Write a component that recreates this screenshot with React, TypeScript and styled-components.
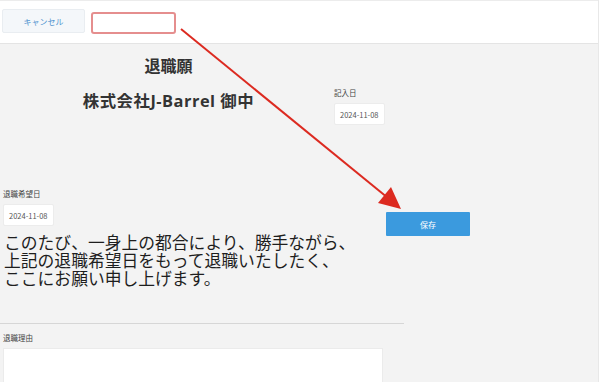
import styled, { createGlobalStyle } from "styled-components";

const GlobalStyle = createGlobalStyle`
  html, body {
    margin: 0;
    height: 100%;
    overflow: hidden;
    background: #ffffff;
    font-family: "Noto Sans CJK JP", "Noto Sans", sans-serif;
  }
  #root {
    height: 100%;
  }
`;

const App = () => {
  return (
    <Page>
      <GlobalStyle />
      <Header>
        <CancelButton>キャンセル</CancelButton>
        <NameBox />
      </Header>
      <Main>
        <TopSection>
          <HeadBlock>
            <Title>退職願</Title>
            <Company>株式会社J-Barrel 御中</Company>
          </HeadBlock>
          <DateBlock>
            <Label>記入日</Label>
            <DateField>2024-11-08</DateField>
          </DateBlock>
        </TopSection>

        <WishSection>
          <Label>退職希望日</Label>
          <DateField>2024-11-08</DateField>
          <Letter>
            このたび、一身上の都合により、勝手ながら、
            <br />
            上記の退職希望日をもって退職いたしたく、
            <br />
            ここにお願い申し上げます。
          </Letter>
          <SaveButton>保存</SaveButton>
        </WishSection>

        <Divider />

        <Label>退職理由</Label>
        <ReasonArea />
      </Main>

      <Arrow width="606" height="382" viewBox="0 0 606 382">
        <line
          x1="181"
          y1="29"
          x2="388"
          y2="198"
          stroke="#dc2a20"
          strokeWidth="2"
        />
        <polygon points="401,209 378,203 391,187" fill="#dc2a20" />
      </Arrow>
    </Page>
  );
};

const Page = styled.div`
  position: relative;
  height: 100%;
  display: flex;
  flex-direction: column;
  width: 598px;
  border-right: 1px solid #e8e8e8;
`;

const Header = styled.div`
  flex-shrink: 0;
  display: flex;
  align-items: center;
  gap: 6px;
  height: 42px;
  padding: 0 2px;
  background: #ffffff;
  border-top: 1px solid #ececec;
  border-bottom: 1px solid #e4e4e4;
`;

const CancelButton = styled.button`
  width: 83px;
  height: 24px;
  margin-top: -2px;
  background: #f4f7fa;
  border: 1px solid #e9edf1;
  border-radius: 2px;
  color: #4f93cf;
  font-family: "Noto Sans CJK JP", sans-serif;
  font-size: 8px;
`;

const NameBox = styled.div`
  width: 81px;
  height: 18px;
  margin-top: 1px;
  background: #ffffff;
  border: 2px solid #e58e8e;
  border-radius: 3px;
`;

const Main = styled.div`
  flex: 1;
  min-height: 0;
  overflow: hidden;
  background: #f3f3f3;
  padding: 11px 0 0 3px;
`;

const TopSection = styled.div`
  display: flex;
  align-items: flex-start;
`;

const HeadBlock = styled.div`
  width: 331px;
  display: flex;
  flex-direction: column;
  align-items: center;
  gap: 13px;
  font-family: "Open Sans", "Noto Sans CJK JP", sans-serif;
`;

const Title = styled.h1`
  margin: 0;
  font-size: 16px;
  line-height: 22px;
  font-weight: bold;
  color: #333333;
`;

const Company = styled.h2`
  margin: 0;
  font-size: 16.4px;
  line-height: 22px;
  letter-spacing: 0.5px;
  font-weight: bold;
  color: #333333;
`;

const DateBlock = styled.div`
  display: flex;
  flex-direction: column;
  align-items: flex-start;
  padding-top: 33px;
`;

const Label = styled.div`
  font-size: 7.5px;
  line-height: 10px;
  color: #444444;
`;

const DateField = styled.div`
  box-sizing: border-box;
  height: 22px;
  margin-top: 5px;
  padding: 0 5px;
  display: flex;
  align-items: center;
  background: #ffffff;
  border: 1px solid #ececec;
  border-radius: 2px;
  font-size: 7.5px;
  color: #555555;
  width: fit-content;
`;

const WishSection = styled.div`
  display: grid;
  grid-template-columns: 383px 84px;
  margin-top: 64px;
  align-items: start;
`;

const Letter = styled.p`
  grid-column: 1;
  margin: 9px 0 0 1px;
  font-family: "Liberation Serif", "Noto Sans CJK JP", serif;
  font-size: 16.8px;
  line-height: 17.8px;
  color: #1e1e1e;
  white-space: nowrap;
`;

const SaveButton = styled.button`
  grid-column: 2;
  grid-row: 1 / span 3;
  margin-top: 23px;
  height: 24px;
  background: #3b9ade;
  border: none;
  border-radius: 1px;
  color: #ffffff;
  font-family: "Noto Sans CJK JP", sans-serif;
  font-size: 8px;
`;

const Divider = styled.div`
  width: 404px;
  margin: 35px 0 9px -3px;
  border-top: 1px solid #d6d6d6;
`;

const ReasonArea = styled.div`
  width: 378px;
  height: 60px;
  margin-top: 5px;
  background: #ffffff;
  border: 1px solid #ebebeb;
`;

const Arrow = styled.svg`
  position: absolute;
  top: 0;
  left: 0;
  pointer-events: none;
`;

export default App;
